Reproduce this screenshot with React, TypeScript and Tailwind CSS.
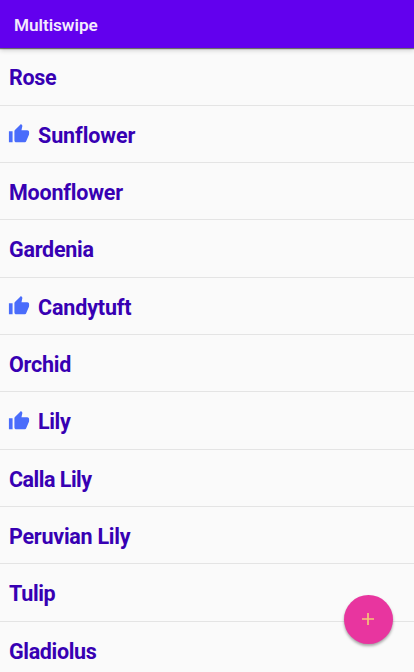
import React from "react";

type Flower = { name: string; tracking: string; liked?: boolean };

const flowers: Flower[] = [
  { name: "Rose", tracking: "tracking-[-0.35px]" },
  { name: "Sunflower", tracking: "tracking-[-0.1px]", liked: true },
  { name: "Moonflower", tracking: "tracking-[-0.2px]" },
  { name: "Gardenia", tracking: "tracking-[-0.25px]" },
  { name: "Candytuft", tracking: "tracking-[-0.15px]", liked: true },
  { name: "Orchid", tracking: "tracking-[-0.25px]" },
  { name: "Lily", tracking: "tracking-[-0.35px]", liked: true },
  { name: "Calla Lily", tracking: "tracking-[-0.5px]" },
  { name: "Peruvian Lily", tracking: "tracking-[-0.25px]" },
  { name: "Tulip", tracking: "tracking-[-0.35px]" },
  { name: "Gladiolus", tracking: "tracking-[-0.35px]" },
];

function ThumbUp() {
  return (
    <svg viewBox="0 0 24 24" className="-ml-px mb-[2px] mr-2 size-[22px] shrink-0 fill-[#4a6cfb]">
      <path d="M1 21h4V9H1v12zm22-11c0-1.1-.9-2-2-2h-6.31l.95-4.57.03-.32c0-.41-.17-.79-.44-1.06L14.17 1 7.59 7.59C7.22 7.95 7 8.45 7 9v10c0 1.1.9 2 2 2h9c.83 0 1.54-.5 1.84-1.22l3.02-7.05c.09-.23.14-.47.14-.73v-2z" />
    </svg>
  );
}

export default function App() {
  return (
    <div className="relative flex h-[672px] w-[414px] flex-col overflow-hidden bg-[#fafafa] font-['Roboto',sans-serif]">
      <header className="z-10 flex h-12 shrink-0 items-center bg-[#6200ee] px-3.5 pt-[3px] shadow-[0_1px_1px_rgba(0,0,0,0.5),0_2px_5px_rgba(0,0,0,0.2)]">
        <h1 className="text-[17.2px] font-semibold tracking-[-0.05px] text-[#f3eafe]">Multiswipe</h1>
      </header>
      <ul className="shrink-0 pt-[0.5px]">
        {flowers.map((flower) => (
          <li
            key={flower.name}
            className="flex h-[57.33px] items-center border-b border-[#e4e4e4] pl-[9px] pt-[3px]"
          >
            {flower.liked && <ThumbUp />}
            <span className={`text-[21.5px] font-bold leading-none text-[#3700b3] ${flower.tracking}`}>
              {flower.name}
            </span>
          </li>
        ))}
      </ul>
      <button
        aria-label="Add"
        className="absolute left-[344px] top-[595px] flex size-[49px] items-center justify-center rounded-full bg-[#e8359f] pb-px pr-px shadow-[0_2px_3px_rgba(0,0,0,0.35)]"
      >
        <svg viewBox="0 0 12 12" className="size-3 fill-none stroke-[#f5c578] stroke-[1.7]">
          <path d="M6 0v12M0 6h12" />
        </svg>
      </button>
    </div>
  );
}
